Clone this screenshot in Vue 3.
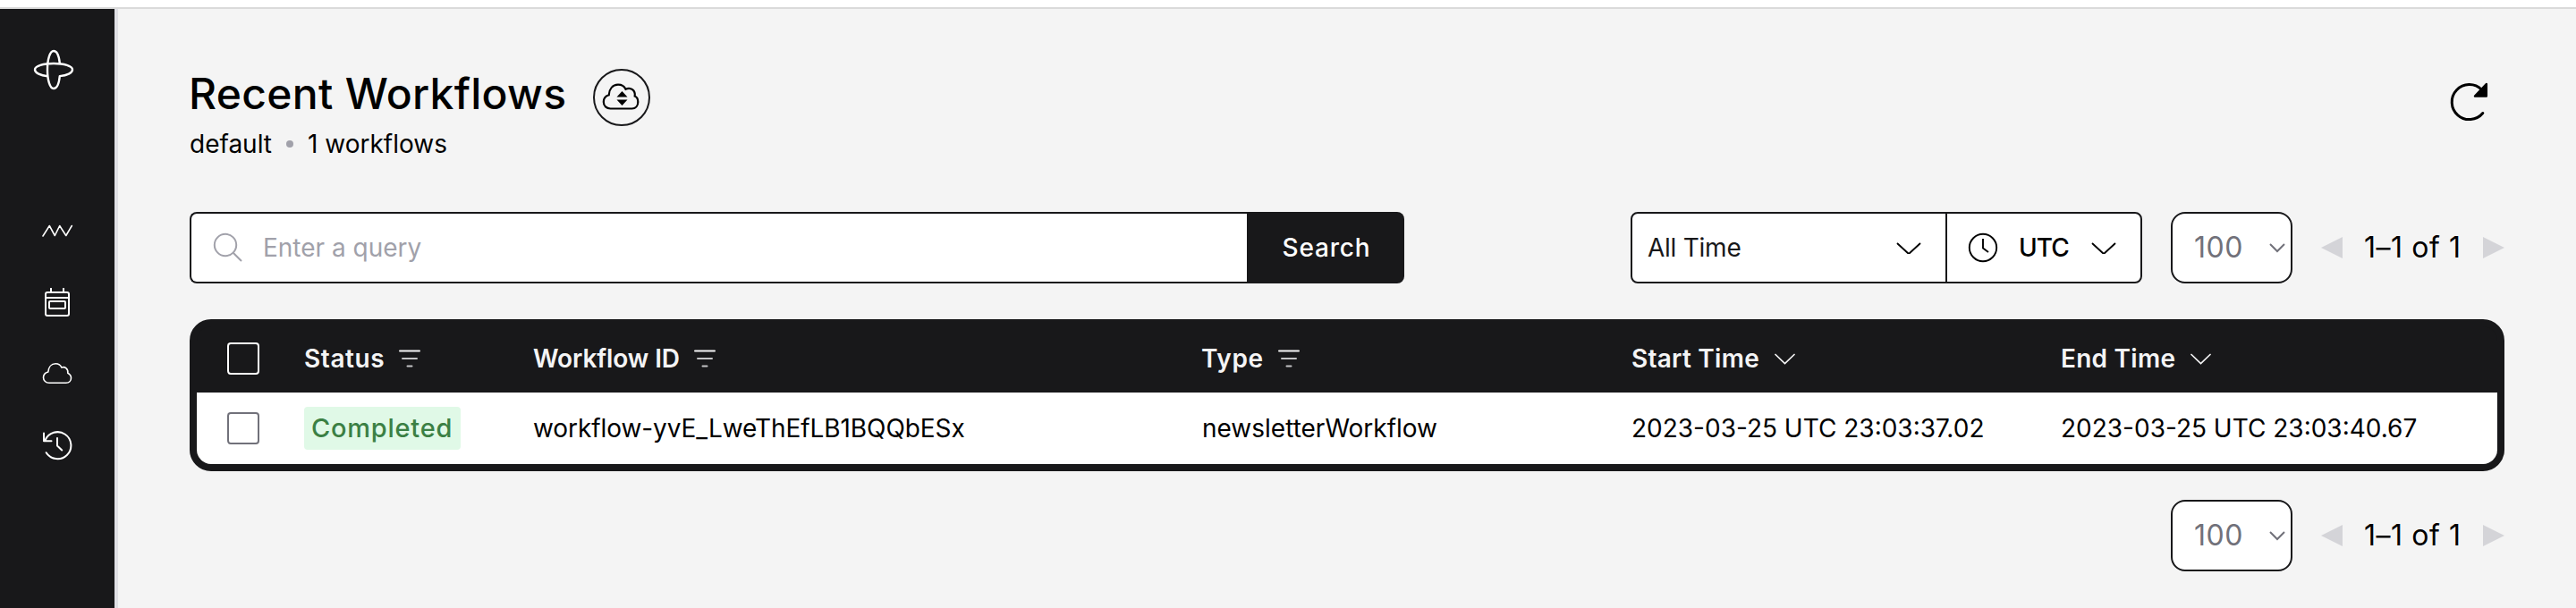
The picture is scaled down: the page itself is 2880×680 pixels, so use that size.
<script setup>
const columns = [
  { label: 'Status', icon: 'filter', cls: 'h-status' },
  { label: 'Workflow ID', icon: 'filter', cls: 'h-id' },
  { label: 'Type', icon: 'filter', cls: 'h-type' },
  { label: 'Start Time', icon: 'chevron', cls: 'h-start' },
  { label: 'End Time', icon: 'chevron', cls: 'h-end' },
]
const rows = [
  {
    status: 'Completed',
    id: 'workflow-yvE_LweThEfLB1BQQbESx',
    type: 'newsletterWorkflow',
    start: '2023-03-25 UTC 23:03:37.02',
    end: '2023-03-25 UTC 23:03:40.67',
  },
]
</script>

<template>
  <div class="app">
    <div class="topbar"></div>
    <div class="body">
      <nav class="sidebar">
        <svg class="logo" width="48" height="48" viewBox="0 0 48 48">
          <path d="M17.2 31.2C9.300 30.400 3 27.500 3 24C3 19.800 12.500 17 24 17C35.500 17 45 19.800 45 24C45 27.500 39 30.300 30.800 31.100C30 39 27.500 45 24 45C19.800 45 17 35.500 17 24C17 12.500 19.800 3 24 3C27.500 3 30 8.800 30.800 16.600" />
        </svg>
        <div class="nav-links">
          <svg width="40" height="40" viewBox="0 0 40 40"><path class="thin" d="M4 26L11.300 14.500L17.300 25.500L22.700 14.500L29.800 25.500L36.300 14.500" /></svg>
          <svg width="40" height="40" viewBox="0 0 40 40">
            <rect x="7" y="9" width="26" height="26" rx="2" />
            <path class="square" d="M7 15H33M13 8V4M27 8V4" />
            <rect x="11" y="19" width="18" height="8" rx="1" />
          </svg>
          <svg width="40" height="40" viewBox="0 0 40 40">
            <path class="thin" d="M11 30.200C7.200 30.200 4.500 27.600 4.500 24.300C4.500 21.200 6.700 18.900 9.800 18C10.200 12.800 13.300 8.800 18.200 8.800C21.200 8.800 23.700 10.200 24.800 13C28.700 11.700 32.500 14.600 31.800 19.300C34 20.500 35.500 22.300 35.500 24.700C35.500 27.800 33.200 30.200 29.800 30.200Z" />
          </svg>
          <svg width="40" height="40" viewBox="0 0 40 40">
            <path d="M7.700 28.200A15 15 0 1 0 6.500 14.500M5 6.500V15.300H13.500M20 12V20.500L25.200 25.500" />
          </svg>
        </div>
      </nav>

      <main class="main">
        <header class="page-head">
          <div>
            <div class="title-row">
              <h1>Recent Workflows</h1>
              <button class="cloud-btn">
                <svg width="44" height="44" viewBox="0 0 44 44">
                  <path class="line" d="M9.500 34.500C5 34.500 1.800 31.400 1.800 27C1.800 23.300 4 20.400 7.700 19.300C8.200 12.500 12 7.700 18 7.700C22 7.700 25 9.500 26.500 12.700C32 10 37.700 14 36.700 20.500C39.500 21.700 40.300 24 40.300 27C40.300 31.200 37.700 34.500 33.500 34.500Z" />
                  <path class="solid" d="M22.500 15L28.500 21.500H16.500ZM16.500 24.500H28.500L22.500 31Z" />
                </svg>
              </button>
            </div>
            <p class="summary"><span>default</span><i class="dot"></i><span>1 workflows</span></p>
          </div>
          <svg class="refresh" width="48" height="48" viewBox="0 0 48 48">
            <path d="M38.500 9.300A19.500 19.500 0 1 0 39.800 35.500" fill="none" stroke="#000" stroke-width="3" stroke-linecap="round" />
            <path d="M43.800 3V16.500H31Z" fill="#000" stroke="#000" stroke-width="2.500" stroke-linejoin="round" />
          </svg>
        </header>

        <div class="toolbar">
          <div class="search">
            <div class="search-field">
              <svg width="34" height="34" viewBox="0 0 34 34"><circle cx="15" cy="14" r="12.200" /><path d="M23.700 22.700L33 32" /></svg>
              <span>Enter a query</span>
            </div>
            <button class="search-btn">Search</button>
          </div>
          <div class="filters">
            <div class="range">
              <span class="range-text">All Time</span>
              <svg width="28" height="14" viewBox="0 0 28 14"><path d="M1 2L14 14L27 2" /></svg>
            </div>
            <div class="zone">
              <svg width="34" height="34" viewBox="0 0 34 34"><circle cx="17" cy="17" r="15.200" /><path d="M17 7V17.500L23 22" /></svg>
              <span class="zone-text">UTC</span>
              <svg width="28" height="14" viewBox="0 0 28 14"><path d="M1 2L14 14L27 2" /></svg>
            </div>
          </div>
          <div class="pager">
            <div class="size">
              <span>100</span>
              <svg width="18" height="11" viewBox="0 0 18 11"><path d="M1 1L9 9L17 1" /></svg>
            </div>
            <i class="tri prev"></i>
            <span class="count">1–1 of 1</span>
            <i class="tri next"></i>
          </div>
        </div>

        <section class="table">
          <div class="tr th">
            <div><i class="check"></i></div>
            <div v-for="c in columns" :key="c.label" class="cell head-cell" :class="c.cls">
              <span>{{ c.label }}</span>
              <svg v-if="c.icon === 'filter'" class="filter" width="24" height="20" viewBox="0 0 24 20">
                <path d="M1 1.500H23" /><path class="dim" d="M4 10H20" /><path class="dim" d="M9.500 18.500H14.500" />
              </svg>
              <svg v-else class="sort" width="24" height="14" viewBox="0 0 24 14"><path d="M2 2.500L12.500 12.500L23 2.500" /></svg>
            </div>
          </div>
          <div v-for="r in rows" :key="r.id" class="tr td">
            <div><i class="check"></i></div>
            <div class="cell"><span class="badge">{{ r.status }}</span></div>
            <div class="cell id">{{ r.id }}</div>
            <div class="cell type">{{ r.type }}</div>
            <div class="cell">{{ r.start }}</div>
            <div class="cell end">{{ r.end }}</div>
          </div>
        </section>

        <div class="pager bottom">
          <div class="size">
            <span>100</span>
            <svg width="18" height="11" viewBox="0 0 18 11"><path d="M1 1L9 9L17 1" /></svg>
          </div>
          <i class="tri prev"></i>
          <span class="count">1–1 of 1</span>
          <i class="tri next"></i>
        </div>
      </main>
    </div>
  </div>
</template>

<style>
body {
  margin: 0;
  background: #f4f4f4;
}
</style>

<style scoped>
* {
  box-sizing: border-box;
}
.app {
  width: 2880px;
  height: 680px;
  overflow: hidden;
  display: flex;
  flex-direction: column;
  background: #f4f4f4;
  color: #000;
  font-family: Inter, "Liberation Sans", sans-serif;
  font-size: 28px;
  line-height: 40px;
  white-space: nowrap;
}
h1,
p {
  margin: 0;
}
button {
  font: inherit;
  padding: 0;
}
svg {
  display: block;
  flex: none;
  fill: none;
}
.topbar {
  height: 10px;
  flex: none;
  background: #fff;
  border-bottom: 2px solid #dadada;
}
.body {
  flex: 1;
  display: flex;
}
.sidebar {
  width: 132px;
  background: #18181a;
  border-right: 4px solid #e0e0e5;
  padding-top: 44px;
}
.sidebar svg {
  stroke: #fff;
  stroke-width: 2;
  stroke-linecap: round;
  stroke-linejoin: round;
}
.sidebar .logo {
  margin-left: 36px;
  stroke-width: 2.400;
}
.sidebar .thin {
  stroke-width: 1.600;
}
.sidebar .square {
  stroke-linecap: butt;
}
.nav-links {
  margin: 136px 0 0 44px;
  display: flex;
  flex-direction: column;
  gap: 40px;
}
.main {
  flex: 1;
  padding: 67px 80px 0 80px;
}
.page-head {
  display: flex;
  justify-content: space-between;
  height: 160px;
}
.title-row {
  display: flex;
  align-items: center;
  height: 64px;
}
h1 {
  width: 452px;
  margin-left: -1px;
  padding-bottom: 8px;
  font-size: 48px;
  font-weight: 450;
  letter-spacing: 0.300px;
}
.cloud-btn {
  width: 64px;
  height: 64px;
  border: 2px solid #18181a;
  border-radius: 50%;
  background: transparent;
  display: flex;
  align-items: center;
  justify-content: center;
}
.cloud-btn .line {
  stroke: #000;
  stroke-width: 2.200;
}
.cloud-btn .solid {
  fill: #000;
}
.summary {
  display: flex;
  align-items: center;
  height: 40px;
}
.dot {
  width: 8px;
  height: 8px;
  border-radius: 50%;
  background: #a1a1aa;
  margin: 0 16px;
}
.refresh {
  margin: 14px 16px 0 0;
}
.toolbar {
  display: flex;
  height: 80px;
}
.search {
  display: flex;
  width: 1358px;
}
.search-field {
  flex: 1;
  display: flex;
  align-items: center;
  background: #fff;
  border: 2px solid #18181a;
  border-right: 0;
  border-radius: 8px 0 0 8px;
  padding-left: 23px;
  color: #a1a1aa;
}
.search-field svg {
  stroke: #a1a1aa;
  stroke-width: 2;
}
.search-field span {
  margin-left: 23px;
}
.search-btn {
  width: 176px;
  border: 0;
  border-radius: 0 8px 8px 0;
  background: #18181a;
  color: #fff;
  font-weight: 500;
  letter-spacing: 0.800px;
  padding-left: 2px;
}
.filters {
  display: flex;
  width: 572px;
  margin-left: 253px;
  background: #fff;
  border: 2px solid #18181a;
  border-radius: 8px;
  color: #18181a;
}
.filters svg {
  stroke: #000;
  stroke-width: 1.900;
}
.range {
  width: 352px;
  border-right: 2px solid #18181a;
  display: flex;
  align-items: center;
  justify-content: space-between;
  padding: 0 27px 0 17px;
}
.range-text {
  letter-spacing: -0.250px;
}
.zone {
  flex: 1;
  display: flex;
  align-items: center;
  padding-left: 23px;
  color: #000;
}
.zone-text {
  width: 81px;
  margin-left: 23px;
  font-weight: 450;
  letter-spacing: -1px;
}
.pager {
  display: flex;
  align-items: center;
  margin-left: auto;
  width: 373px;
  height: 80px;
}
.bottom {
  margin-top: 32px;
}
.size {
  width: 136px;
  height: 80px;
  border: 2px solid #18181a;
  border-radius: 16px;
  background: #fff;
  color: #71717a;
  display: flex;
  align-items: center;
  justify-content: space-between;
  padding: 0 6px 0 24px;
  font-size: 32px;
  letter-spacing: 0.500px;
}
.size svg {
  stroke: #71717a;
  stroke-width: 2;
}
.tri {
  width: 24px;
  height: 24px;
  background: #d4d4d8;
}
.prev {
  margin-left: 32px;
  clip-path: polygon(0 50%, 100% 0, 100% 100%);
}
.next {
  clip-path: polygon(100% 50%, 0 0, 0 100%);
}
.count {
  width: 133px;
  margin-left: 24px;
  font-size: 32px;
  letter-spacing: 0.550px;
}
.table {
  margin-top: 40px;
  height: 170px;
  background: #18181a;
  border: 8px solid #18181a;
  border-radius: 24px;
}
.tr {
  display: grid;
  grid-template-columns: 86px 256px 747px 481px 481px 1fr;
  align-items: center;
  padding-left: 34px;
}
.th {
  height: 74px;
  padding-bottom: 2px;
  color: #f4f4f5;
  font-weight: 600;
}
.td {
  height: 80px;
  background: #fff;
  border-radius: 0 0 16px 16px;
}
.check {
  display: block;
  width: 36px;
  height: 36px;
  border: 2px solid #71717a;
  border-radius: 4px;
}
.th .check {
  border-color: #fff;
}
.head-cell {
  display: flex;
  align-items: center;
  gap: 16px;
}
.h-status {
  letter-spacing: 0.600px;
}
.h-id {
  letter-spacing: -0.100px;
}
.h-type {
  letter-spacing: 0.600px;
}
.h-start,
.h-end {
  letter-spacing: 0.250px;
}
.h-end,
.end {
  margin-left: -1px;
}
.type {
  padding-left: 1px;
}
.head-cell svg {
  stroke: #f4f4f5;
  stroke-width: 2;
  stroke-linecap: round;
}
.head-cell .sort {
  stroke-width: 1.700;
}
.head-cell .dim {
  stroke: #c4c4c6;
}
.id {
  letter-spacing: -0.080px;
}
.badge {
  display: inline-block;
  width: 175px;
  height: 48px;
  line-height: 48px;
  padding-left: 8px;
  border-radius: 4px;
  background: #e0f9e7;
  color: #3b8044;
  font-size: 29px;
  font-weight: 550;
  letter-spacing: 0.750px;
}
</style>
